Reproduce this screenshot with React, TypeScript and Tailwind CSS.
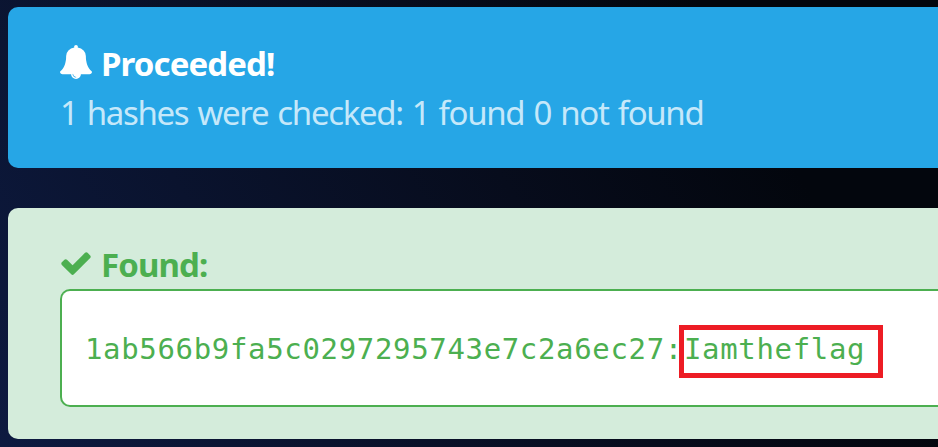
function BellIcon() {
  return (
    <svg viewBox="64 0 1664 1792" className="mt-[8px] h-[34px] w-[32px] shrink-0" fill="currentColor" preserveAspectRatio="none">
      <path d="M912 1696q0-16-16-16-59 0-101.500-42.500t-42.500-101.500q0-16-16-16t-16 16q0 73 51.500 124.500t124.500 51.500q16 0 16-16zm816-288q0 52-38 90t-90 38h-448q0 106-75 181t-181 75-181-75-75-181h-448q-52 0-90-38t-38-90q50-42 91-88t85-119.500 74.500-158.500 50-206 19.500-260q0-152 117-282.500t307-158.500q-8-19-8-39 0-40 28-68t68-28 68 28 28 68q0 20-8 39 190 28 307 158.500t117 282.500q0 139 19.500 260t50 206 74.500 158.500 85 119.500 91 88z" />
    </svg>
  );
}

function CheckIcon() {
  return (
    <svg viewBox="64 0 1664 1792" className="mt-[8px] h-[34px] w-[32px] shrink-0" fill="currentColor">
      <path d="M1671 566q0 40-28 68l-724 724-136 136q-28 28-68 28t-68-28l-136-136-362-362q-28-28-28-68t28-68l136-136q28-28 68-28t68 28l294 295 656-657q28-28 68-28t68 28l136 136q28 28 28 68z" />
    </svg>
  );
}

export default function App() {
  return (
    <main className="flex h-[447px] w-full flex-col gap-10 overflow-hidden bg-linear-[60deg] from-[#0d1a40] via-[#070c1c] via-55% to-[#03060d] to-80% pt-[7px] pl-2 font-['Noto_Sans','Open_Sans',sans-serif] whitespace-nowrap">
      <section className="h-[161px] shrink-0 rounded-l-[10px] bg-[#26a6e6] pt-[30px] pl-[52px] text-white">
        <h2 className="flex h-[49px] gap-[9px] text-[33px] leading-[54px] font-bold">
          <BellIcon />
          <span className="tracking-[-0.900px]">Proceeded!</span>
        </h2>
        <p className="text-[33px] leading-[54px] tracking-[-1.350px] [word-spacing:2px] text-[#c5e8fa]">
          1 hashes were checked: 1 found 0 not found
        </p>
      </section>
      <section className="h-[231px] shrink-0 rounded-l-[10px] bg-[#d4ecdb] pt-[30px] pl-[52px] text-[#4caf50]">
        <h2 className="flex h-[51px] gap-[9px] text-[33px] leading-[54px] font-bold">
          <CheckIcon />
          <span className="tracking-[-0.900px]">Found:</span>
        </h2>
        <div className="flex h-[118px] items-start rounded-l-[10px] border-2 border-r-0 border-[#4caf50] bg-white pt-[34px] pl-[23px] font-['DejaVu_Sans_Mono','Liberation_Mono',monospace] text-[29px] leading-[43px] tracking-[0.660px]">
          <span className="w-[594px] pt-[3px]">1ab566b9fa5c0297295743e7c2a6ec27:</span>
          <span className="h-[53px] w-[204px] border-5 border-[#ed1c24] leading-[39px]">Iamtheflag</span>
        </div>
      </section>
    </main>
  );
}
